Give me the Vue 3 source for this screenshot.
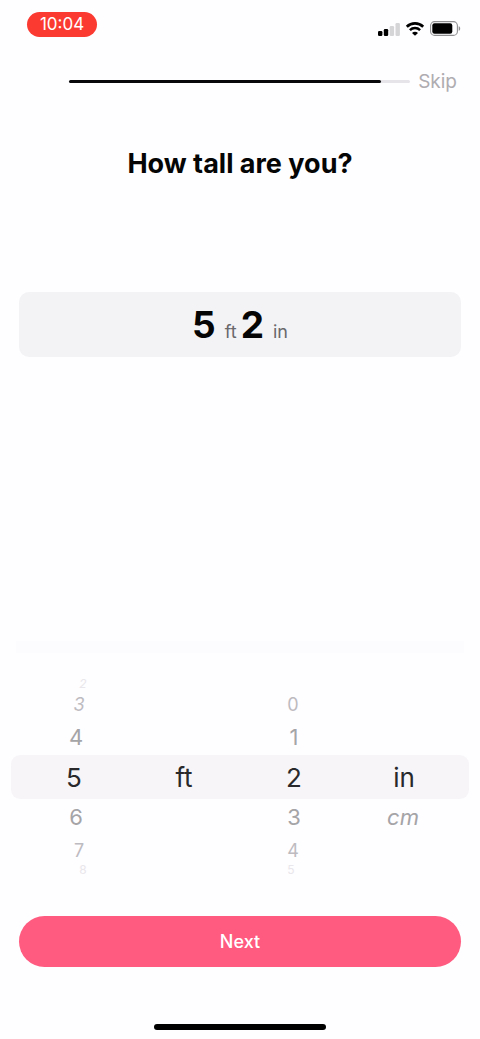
<script setup>
import { computed, ref } from 'vue'

const progress = ref(91.5)
const feet = ref(5)
const inches = ref(2)
const unit = ref('in')

const range = (from, to) => Array.from({ length: to - from + 1 }, (_, i) => from + i)

const columns = computed(() => [
  { name: 'left', label: 'Feet', values: range(1, 9), selected: feet.value, set: (v) => (feet.value = v) },
  { name: 'ft', label: 'Feet unit', values: ['ft'], selected: 'ft', set: () => {} },
  { name: 'middle', label: 'Inches', values: range(0, 11), selected: inches.value, set: (v) => (inches.value = v) },
  { name: 'right', label: 'Unit', values: ['in', 'cm'], selected: unit.value, set: (v) => (unit.value = v) },
])

// Seven wheel slots, from three above the selection to three below it.
const slots = (column) => {
  const index = column.values.indexOf(column.selected)
  return [-3, -2, -1, 0, 1, 2, 3].map((offset) => ({
    offset,
    value: column.values[index + offset],
    classes: ['slot', `d${Math.abs(offset)}`, offset < 0 ? 'above' : 'below'],
  }))
}
</script>

<template>
  <main class="screen">
    <div class="status">
      <span class="time">10:04</span>
      <div class="indicators">
        <svg width="22" height="14" viewBox="0 0 22 14" aria-hidden="true">
          <rect x="0" y="9" width="4.4" height="5" rx="1.2" fill="#000" />
          <rect x="5.8" y="7" width="4.4" height="7" rx="1.2" fill="#000" />
          <rect x="11.7" y="4" width="4.4" height="10" rx="1.2" fill="#d5d4d6" />
          <rect x="17.5" y="1" width="4.4" height="13" rx="1.2" fill="#d5d4d6" />
        </svg>
        <svg width="20" height="14" viewBox="0 0 20 14" aria-hidden="true">
          <path d="M1.8 4.8C6.4.3 13.6.3 18.2 4.8" fill="none" stroke="#000" stroke-width="2.7" />
          <path d="M4.9 8.2c2.9-2.8 7.3-2.8 10.2 0" fill="none" stroke="#000" stroke-width="2.5" />
          <path d="M10 13.8 7 10.9c1.7-1.6 4.3-1.6 6 0z" fill="#000" />
        </svg>
        <svg width="31" height="15" viewBox="0 0 31 15" aria-hidden="true">
          <rect x=".6" y=".6" width="26.8" height="13.8" rx="4" fill="none" stroke="#8f8e90" stroke-width="1.1" />
          <rect x="2.3" y="2.3" width="20" height="10.4" rx="2.2" fill="#000" />
          <path d="M28.7 5.2c2 .7 2 3.9 0 4.6z" fill="#8f8e90" />
        </svg>
      </div>
    </div>

    <header class="header">
      <div class="track" role="progressbar" aria-label="Progress" :aria-valuenow="progress">
        <div class="fill" :style="{ width: progress + '%' }"></div>
      </div>
      <button class="skip" type="button">Skip</button>
    </header>

    <h1 class="title">How tall are you?</h1>

    <div class="value">
      <strong>{{ feet }}</strong><span class="unit">ft</span>
      <strong class="second">{{ inches }}</strong><span class="unit">in</span>
    </div>

    <div class="edge"></div>

    <div class="picker">
      <div v-for="column in columns" :key="column.name" :class="['column', column.name]" role="group" :aria-label="column.label">
        <template v-for="slot in slots(column)" :key="slot.offset">
          <button v-if="slot.value !== undefined" type="button" :class="slot.classes" :aria-pressed="slot.offset === 0" @click="column.set(slot.value)">{{ slot.value }}</button>
          <span v-else :class="slot.classes"></span>
        </template>
      </div>
    </div>

    <button class="next" type="button">Next</button>
    <div class="home"></div>
  </main>
</template>

<style>
body {
  background: #fefdff;
}
</style>

<style scoped>
.screen {
  box-sizing: border-box;
  min-height: 100vh;
  display: flex;
  flex-direction: column;
  padding-bottom: 9px;
  font-family: Inter, "Liberation Sans", sans-serif;
  color: #050506;
}
button {
  border: 0;
  padding: 0;
  background: none;
  font-family: inherit;
  cursor: pointer;
}
.status {
  display: flex;
  justify-content: space-between;
  align-items: center;
  padding: 12px 19px 0 27px;
}
.time {
  width: 70px;
  border-radius: 13px;
  background: #fb3a32;
  color: #fff;
  font-size: 17px;
  line-height: 25px;
  text-align: center;
}
.indicators {
  display: flex;
  align-items: center;
  gap: 5px;
  padding-top: 8px;
}
.header {
  display: flex;
  align-items: center;
  gap: 8px;
  margin-top: 32px;
  padding: 0 23px 0 69px;
}
.track {
  flex: 1;
  height: 3px;
  border-radius: 2px;
  background: #e6e4e8;
}
.fill {
  height: 100%;
  border-radius: 2px;
  background: #08080a;
}
.skip {
  color: #aeacb0;
  font-size: 19px;
  line-height: 25px;
}
.title {
  margin: 54px 20px 0;
  font-size: 27px;
  line-height: 32px;
  font-weight: 700;
  text-align: center;
}
.value {
  display: flex;
  justify-content: center;
  align-items: baseline;
  margin: 112px 19px 0;
  padding: 10px 0;
  border-radius: 10px;
  background: #f3f2f5;
}
.value strong {
  font-size: 37px;
  line-height: 45px;
  font-weight: 700;
}
.value .second {
  margin-left: 4px;
}
.unit {
  margin-left: 9px;
  color: #69686b;
  font-size: 18px;
  line-height: 22px;
}
.edge {
  height: 12px;
  margin: auto 16px 26px;
  background: #fcfbfe;
}
.picker {
  position: relative;
  z-index: 0;
  display: grid;
  grid-template-columns: repeat(4, 1fr);
  margin: 0 11px 41px;
  padding: 0 10px 0 8px;
}
.picker::before {
  content: "";
  position: absolute;
  z-index: -1;
  inset: 76px 0;
  border-radius: 9px;
  background: #f7f5f8;
}
.column {
  display: flex;
  flex-direction: column;
}
.slot {
  box-sizing: border-box;
  display: flex;
  align-items: center;
  justify-content: center;
  color: #a5a4a7;
}
.d0 {
  height: 44px;
  color: #29282b;
  font-size: 26px;
}
.d1 {
  height: 36px;
  font-size: 22px;
}
.d2 {
  height: 30px;
  color: #bdbbbf;
  font-size: 18px;
}
.d3 {
  height: 10px;
  color: #e9e7eb;
  font-size: 12px;
  line-height: 10px;
}
.left .d1 {
  padding-left: 4px;
}
.left .d2 {
  padding-left: 10px;
}
.left .d3 {
  padding-left: 18px;
}
.middle .d2,
.right .d1 {
  padding-right: 2px;
}
.middle .d3 {
  padding-right: 6px;
}
.left .d2.above,
.left .d3.above,
.right .d1.below {
  font-style: italic;
}
.next {
  margin: 0 19px 57px;
  border-radius: 26px;
  background: #ff5a7f;
  color: #fff;
  font-size: 18px;
  line-height: 51px;
  font-weight: 500;
}
.home {
  align-self: center;
  width: 36%;
  height: 6px;
  border-radius: 3px;
  background: #000;
}
</style>
